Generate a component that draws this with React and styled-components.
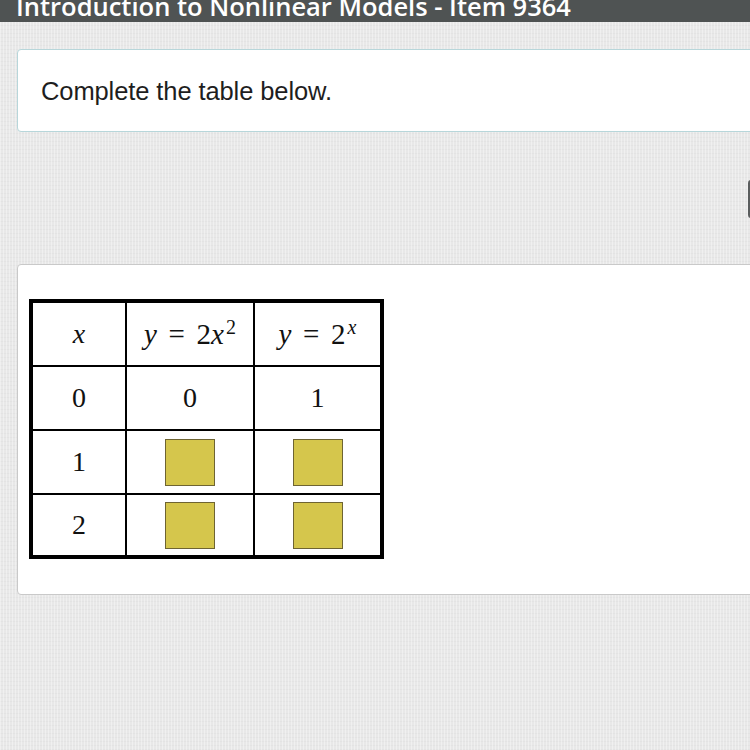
import * as React from "react";
import styled, { createGlobalStyle } from "styled-components";

const GlobalStyle = createGlobalStyle`
  html, body {
    margin: 0;
    padding: 0;
    width: 750px;
    height: 750px;
    overflow: hidden;
    background-color: #e8e8e8;
    background-image:
      repeating-linear-gradient(90deg, rgba(255,255,255,0.35) 0 1px, transparent 1px 3px),
      repeating-linear-gradient(0deg, rgba(0,0,0,0.025) 0 1px, transparent 1px 4px);
  }
`;

const rows = [
  { x: "0", a: "0", b: "1" },
  { x: "1", a: null, b: null },
  { x: "2", a: null, b: null },
];

export default function App() {
  return (
    <>
      <GlobalStyle />
      <TitleBar>
        <Title>Introduction to Nonlinear Models - Item 9364</Title>
      </TitleBar>
      <Page>
        <PromptPanel>
          <Prompt>Complete the table below.</Prompt>
        </PromptPanel>
        <ToolRow>
          <EdgeButton />
        </ToolRow>
        <TablePanel>
          <Grid>
            <Cell>
              <Var>x</Var>
            </Cell>
            <Cell $math>
              <Var>y</Var>
              <Op>=</Op>2<Var>x</Var>
              <Sup>2</Sup>
            </Cell>
            <Cell $math>
              <Var>y</Var>
              <Op>=</Op>2<Sup $italic>x</Sup>
            </Cell>
            {rows.map((r) => (
              <React.Fragment key={r.x}>
                <Cell>{r.x}</Cell>
                <Cell>{r.a ?? <AnswerBox />}</Cell>
                <Cell>{r.b ?? <AnswerBox />}</Cell>
              </React.Fragment>
            ))}
          </Grid>
        </TablePanel>
      </Page>
    </>
  );
}

const TitleBar = styled.div`
  height: 22px;
  background-color: #4f5353;
  overflow: hidden;
  padding-left: 16px;
`;

const Title = styled.div`
  margin-top: -6px;
  color: #fff;
  font-family: "Open Sans", sans-serif;
  font-size: 25.5px;
  font-weight: 600;
  line-height: 25.5px;
  white-space: nowrap;
`;

const Page = styled.div`
  padding-left: 17px;
  padding-top: 27px;
  display: flex;
  flex-direction: column;
`;

const PromptPanel = styled.div`
  width: 760px;
  height: 81px;
  box-sizing: content-box;
  background-color: #fff;
  border: 1px solid #b7d6da;
  border-radius: 4px;
  display: flex;
  align-items: center;
  padding-left: 23px;
`;

const Prompt = styled.div`
  margin-top: 2px;
  color: #1e1e1e;
  font-family: "Liberation Sans", Arial, sans-serif;
  font-size: 25.5px;
  letter-spacing: -0.1px;
`;

const ToolRow = styled.div`
  width: 733px;
  display: flex;
  justify-content: flex-end;
  margin-top: 48px;
`;

const EdgeButton = styled.div`
  width: 60px;
  height: 38px;
  margin-right: -58px;
  background-color: #5a5d5e;
  border-radius: 3px;
`;

const TablePanel = styled.div`
  margin-top: 46px;
  width: 760px;
  height: 331px;
  box-sizing: border-box;
  background-color: #fff;
  border: 1px solid #c9c9c9;
  border-radius: 4px;
  padding-top: 34px;
  padding-left: 11px;
`;

const Grid = styled.div`
  display: inline-grid;
  grid-template-columns: 92px 126px 125px;
  grid-template-rows: 62px 62px 62px 60px;
  gap: 2px;
  background-color: #000;
  border: 4px solid #000;
`;

const Cell = styled.div`
  background-color: #fff;
  display: flex;
  align-items: center;
  justify-content: center;
  color: #111;
  font-family: "Liberation Serif", "Times New Roman", serif;
  font-size: ${(p) => (p.$math ? "29px" : "28px")};
  white-space: nowrap;
`;

const Var = styled.span`
  font-style: italic;
`;

const Op = styled.span`
  margin: 0 0.4em;
`;

const Sup = styled.span`
  font-size: 20px;
  font-style: ${(p) => (p.$italic ? "italic" : "normal")};
  align-self: flex-start;
  margin-top: 13px;
  margin-left: 2px;
`;

const AnswerBox = styled.div`
  width: 50px;
  height: 47px;
  box-sizing: border-box;
  background-color: #d5c64c;
  border: 1px solid #6e6432;
`;
